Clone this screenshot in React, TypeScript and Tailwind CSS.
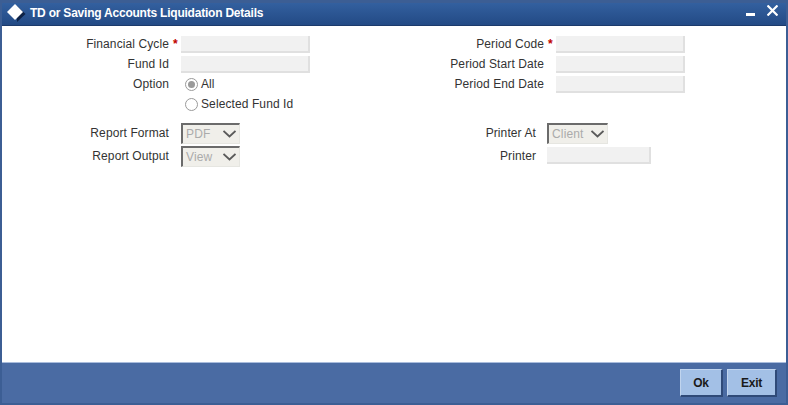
import React from 'react';

const font = { fontFamily: '"Liberation Sans", Arial, sans-serif' };

// Read-only text box used across the form
const Box = ({ w = 'w-[129px]' }: { w?: string }) => (
  <div className={`${w} h-[17px] bg-[#f1f1f1] border-r-2 border-b-2 border-[#e0e0e0]`}></div>
);

const Select = ({ value, w }: { value: string; w: string }) => (
  <div className={`${w} h-[21px] flex items-center justify-between bg-[#f0efea] border-t-2 border-l-2 border-r border-b border-t-[#6b6b6b] border-l-[#6b6b6b] border-r-[#e6e6e1] border-b-[#e6e6e1] pl-[3px] pr-[3px] text-[12px] tracking-[0.15px] text-[#ababab]`}>
    <span>{value}</span>
    <svg width="13" height="8" viewBox="0 0 13 8" fill="none" stroke="#5a5a5a" strokeWidth="1.8">
      <path d="M0.5 1 L6.5 6.5 L12.5 1" />
    </svg>
  </div>
);

const Radio = ({ checked, label }: { checked?: boolean; label: string }) => (
  <div className="h-5 flex items-center gap-[3px] pl-[4px]">
    <div className="w-[13px] h-[13px] rounded-full border border-[#9a9a9a] bg-white flex items-center justify-center">
      {checked && <div className="w-[7px] h-[7px] rounded-full bg-[#9a9a9a]"></div>}
    </div>
    <span>{label}</span>
  </div>
);

const Row = ({
  label,
  required,
  lw,
  gap = 'w-3',
  h = 'h-5',
  lift,
  children,
}: {
  label?: string;
  required?: boolean;
  lw: string;
  gap?: string;
  h?: string;
  lift?: boolean;
  children: React.ReactNode;
}) => (
  <div className={`flex items-center ${h}`}>
    <div className={`${lw} text-right ${lift ? 'pb-[2px]' : ''}`}>{label}</div>
    <div className={`${gap} text-[#c00000] font-bold pl-[4px] leading-none`}>{required ? '*' : ''}</div>
    {children}
  </div>
);

export default function App() {
  return (
    <div className="w-[788px] h-[405px] flex flex-col bg-[#3c5e94] text-xs tracking-[0.1px] text-[#333333]" style={font}>
      {/* Title bar */}
      <div className="h-[23px] mt-[3px] mx-[2px] flex items-center justify-between bg-gradient-to-b from-[#33609f] to-[#234a85] border-b border-[#1c3a6b] pl-[5px] pr-[8px] shrink-0">
        <div className="flex items-center gap-[4px]">
          <svg width="20" height="18" viewBox="0 0 20 18" className="-mt-[2px]">
            <path d="M10 2 L18.5 10 L10 18 Z" fill="#0e2245" />
            <path d="M8 0 L16 8 L8 16 L0 8 Z" fill="#ffffff" />
          </svg>
          <span className="text-white font-bold text-[12px] tracking-[-0.22px] -ml-[1px] -mt-[2px]">TD or Saving Accounts Liquidation Details</span>
        </div>
        <div className="flex items-start gap-[12px] h-full">
          <div className="w-[9px] h-[3px] bg-white mt-[10px]"></div>
          <svg width="11" height="11" viewBox="0 0 11 11" className="mt-[2px]" stroke="#fff" strokeWidth="2.2">
            <path d="M0.5 0.5 L10.5 10.5 M10.5 0.5 L0.5 10.5" />
          </svg>
        </div>
      </div>

      {/* Form body */}
      <div className="flex-1 mx-[2px] bg-white flex pt-[8px]">
        <div className="w-[400px]">
          <Row label="Financial Cycle" required lw="w-[167px]"><Box /></Row>
          <Row label="Fund Id" lw="w-[167px]"><Box /></Row>
          <Row label="Option" lw="w-[167px]"><Radio checked label="All" /></Row>
          <Row lw="w-[167px]"><Radio label="Selected Fund Id" /></Row>
          <div className="h-[8px]"></div>
          <Row label="Report Format" lift lw="w-[167px]" h="h-[23px]"><Select value="PDF" w="w-[59px]" /></Row>
          <Row label="Report Output" lift lw="w-[167px]" h="h-[23px]"><Select value="View" w="w-[59px]" /></Row>
        </div>
        <div className="flex-1">
          <Row label="Period Code" required lw="w-[142px]"><Box /></Row>
          <Row label="Period Start Date" lw="w-[142px]"><Box /></Row>
          <Row label="Period End Date" lw="w-[142px]"><Box /></Row>
          <div className="h-[28px]"></div>
          <Row label="Printer At" lift lw="w-[134px]" gap="w-[11px]" h="h-[23px]"><Select value="Client" w="w-[61px]" /></Row>
          <Row label="Printer" lw="w-[134px]" gap="w-[11px]" h="h-[21px]"><Box w="w-[104px]" /></Row>
        </div>
      </div>

      {/* Footer */}
      <div className="h-[41px] shrink-0 mx-[2px] mb-[2px] bg-[#4a6ba3] border-t border-[#a9bcdc] flex items-start justify-end gap-[4px] pt-[6px] pr-[9px]">
        <button className="w-[43px] h-[28px] bg-[#a3c0e6] border-t border-l border-[#c0d4ee] border-r-2 border-b-2 border-r-[#2f4a78] border-b-[#2f4a78] font-bold text-[12px] tracking-[-0.2px] text-[#1a1a1a]">Ok</button>
        <button className="w-[50px] h-[28px] bg-[#a3c0e6] border-t border-l border-[#c0d4ee] border-r-2 border-b-2 border-r-[#2f4a78] border-b-[#2f4a78] font-bold text-[12px] tracking-[-0.2px] text-[#1a1a1a]">Exit</button>
      </div>
    </div>
  );
}
